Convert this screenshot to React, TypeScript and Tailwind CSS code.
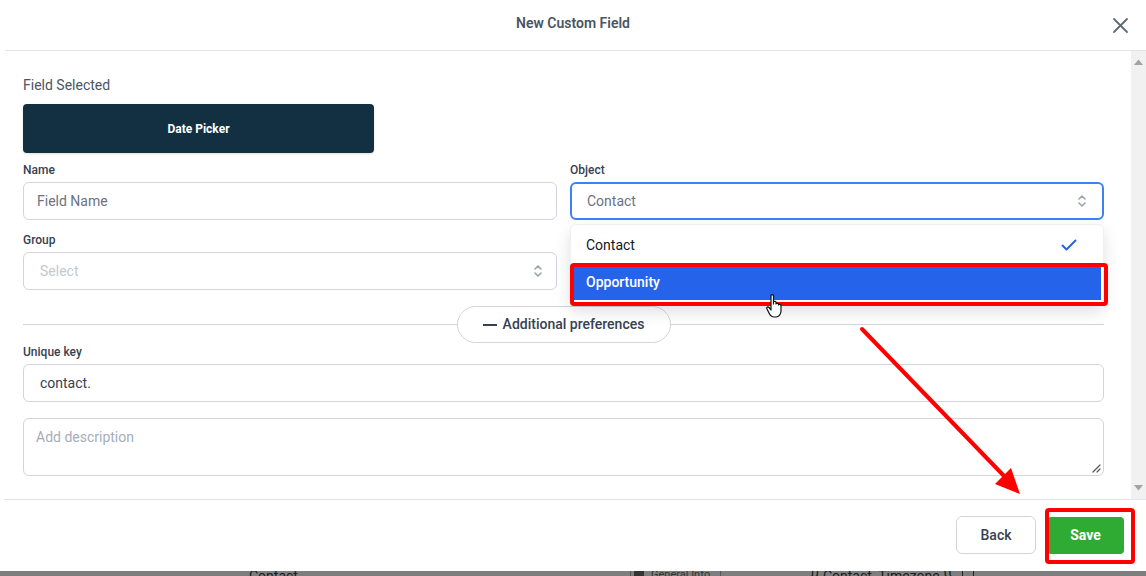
import React from "react";

function Chevrons({ className = "" }: { className?: string }) {
  return (
    <svg width="10" height="16" viewBox="0 0 10 16" className={className} fill="none" stroke="currentColor" strokeWidth="1.6" strokeLinecap="round" strokeLinejoin="round">
      <path d="M2 6 L5 3 L8 6" />
      <path d="M2 10 L5 13 L8 10" />
    </svg>
  );
}

export default function App() {
  return (
    <div className="relative w-[1146px] h-[576px] overflow-hidden bg-white flex flex-col" style={{ fontFamily: "Roboto, 'Noto Sans', sans-serif" }}>
      {/* Modal */}
      <div className="flex-1 flex flex-col bg-white min-h-0">
        {/* Header */}
        <div className="relative h-[51px] shrink-0 flex items-center justify-center">
          <span className="text-[14px] font-semibold text-[#4b5563] -mt-[5px]">New Custom Field</span>
          <svg className="absolute right-[17px] top-[17px]" width="17" height="17" viewBox="0 0 17 17" fill="none" stroke="#5f6b73" strokeWidth="1.8" strokeLinecap="round">
            <path d="M2 2 L15 15 M15 2 L2 15" />
          </svg>
          <div className="absolute left-[5px] right-0 bottom-0 h-px bg-[#e2e4ea]" />
        </div>

        {/* Body */}
        <div className="flex-1 flex min-h-0">
          <div className="flex-1 pl-[23px] pr-[27px] pt-[24px]">
            <div className="text-[14px] leading-[20px] text-[#4b5563]">Field Selected</div>
            <div className="mt-[9px] w-[351px] h-[49px] rounded-[4px] bg-[#132f42] flex items-center justify-center text-white text-[12px] font-bold shadow-sm">
              Date Picker
            </div>

            <div className="grid grid-cols-2 gap-x-[13px] mt-[9px]">
              <div>
                <div className="text-[12px] leading-[16px] font-medium text-[#374151]">Name</div>
                <div className="mt-[4px] h-[38px] rounded-[6px] border border-[#d1d5db] flex items-center pl-[13px] text-[14px] text-[#6b7280]">
                  Field Name
                </div>
              </div>
              <div className="relative">
                <div className="text-[12px] leading-[16px] font-medium text-[#374151]">Object</div>
                <div className="mt-[4px] h-[38px] rounded-[6px] border-2 border-[#3b82f6] flex items-center justify-between pl-[15px] pr-[15px] text-[14px] text-[#6b7280]">
                  <span>Contact</span>
                  <Chevrons className="text-[#9ca3af]" />
                </div>
                {/* Dropdown */}
                <div className="absolute left-0 right-0 top-[62px] z-20 rounded-[6px] bg-white border border-[#eef0f3] shadow-[0_6px_16px_rgba(0,0,0,0.12)] pb-[5px]">
                  <div className="h-[40px] flex items-center justify-between pl-[15px] pr-[26px] text-[14px] text-[#111827]">
                    <span>Contact</span>
                    <svg width="16" height="12" viewBox="0 0 16 12" fill="none" stroke="#2563eb" strokeWidth="2" strokeLinecap="round" strokeLinejoin="round">
                      <path d="M1.5 6.5 L5.5 10.5 L14.5 1.5" />
                    </svg>
                  </div>
                  <div className="relative h-[35px] mx-[2px] bg-[#2563eb] flex items-center pl-[13px] text-[14px] font-medium text-white">
                    Opportunity
                  </div>
                  <div className="absolute left-[-1px] right-[-5px] top-[38px] h-[43px] border-4 border-[#ff0000] rounded-[4px] pointer-events-none" />
                </div>
              </div>
              <div className="mt-[12px]">
                <div className="text-[12px] leading-[16px] font-medium text-[#374151]">Group</div>
                <div className="mt-[4px] h-[38px] rounded-[6px] border border-[#d1d5db] flex items-center justify-between pl-[16px] pr-[13px] text-[14px] text-[#c4c8cf]">
                  <span>Select</span>
                  <Chevrons className="text-[#9ca3af]" />
                </div>
              </div>
              <div />
            </div>

            {/* Additional preferences divider */}
            <div className="relative mt-[16px] h-[37px] flex items-center justify-center">
              <div className="absolute left-0 right-0 top-[18px] h-px bg-[#d1d5db]" />
              <div className="relative h-[37px] w-[214px] rounded-full border border-[#d1d5db] bg-white flex items-center justify-center gap-[6px] text-[14px] font-medium text-[#374151]">
                <span className="inline-block w-[14px] h-[2px] bg-[#374151]" />
                <span>Additional preferences</span>
              </div>
            </div>

            <div className="mt-[1px] text-[12px] leading-[16px] font-medium text-[#374151]">Unique key</div>
            <div className="mt-[4px] h-[38px] rounded-[6px] border border-[#d1d5db] flex items-center pl-[16px] text-[14px] text-[#374151]">
              contact.
            </div>

            <div className="relative mt-[16px] h-[58px] rounded-[6px] border border-[#d1d5db] pl-[12px] pt-[8px] text-[14px] text-[#a5adb8]">
              Add description
              <svg className="absolute right-[2px] bottom-[2px]" width="10" height="10" viewBox="0 0 10 10" stroke="#555" strokeWidth="1.2" strokeLinecap="round">
                <path d="M9 2 L2 9 M9 6 L6 9" />
              </svg>
            </div>
          </div>

          {/* Scrollbar */}
          <div className="w-[15px] bg-[#f1f1f1] flex flex-col items-center justify-between py-[8px]">
            <svg width="9" height="6" viewBox="0 0 9 6"><path d="M0 6 L4.5 0.5 L9 6 Z" fill="#a3a3a3" /></svg>
            <svg width="9" height="6" viewBox="0 0 9 6"><path d="M0 0 L4.5 5.5 L9 0 Z" fill="#a3a3a3" /></svg>
          </div>
        </div>

        {/* Footer */}
        <div className="relative h-[72px] shrink-0 flex items-center justify-end pr-[22px] gap-[11px]">
          <div className="absolute left-[4px] right-0 top-0 h-px bg-[#e2e4ea]" />
          <div className="h-[38px] w-[80px] rounded-[6px] border border-[#d1d5db] bg-white flex items-center justify-center text-[14px] font-medium text-[#374151]">
            Back
          </div>
          <div className="h-[37px] w-[77px] rounded-[4px] bg-[#2fab34] flex items-center justify-center text-[14px] font-bold text-white">
            Save
          </div>
          <div className="absolute right-[11px] top-[9px] w-[90px] h-[56px] border-4 border-[#ff0000] rounded-[4px] pointer-events-none" />
        </div>
      </div>

      {/* Background page strip */}
      <div className="h-[5px] shrink-0 bg-[#7e7e7e] overflow-hidden relative text-[14px] text-[#1a1a1a]">
        <span className="absolute left-[249px] top-[-3px] leading-[16px]">Contact</span>
        <span className="absolute left-[630px] top-[-1px] h-[8px] w-px bg-[#555]" />
        <span className="absolute left-[634px] top-[-2px] w-[10px] h-[8px] bg-[#333]" />
        <span className="absolute left-[651px] top-[-4px] leading-[16px] text-[11px] text-[#333]">General Info</span>
        <span className="absolute left-[720px] top-[-1px] h-[8px] w-px bg-[#555]" />
        <span className="absolute left-[810px] top-[-3px] leading-[16px]">{"{{ Contact_Timezone }}"}</span>
        <span className="absolute left-[962px] top-[-2px] w-[12px] h-[10px] border border-[#222] rounded-[2px]" />
      </div>

      {/* Red arrow annotation */}
      <svg className="absolute left-0 top-0 pointer-events-none z-30" width="1146" height="576" viewBox="0 0 1146 576">
        <line x1="862" y1="329" x2="1006" y2="478" stroke="#ff0000" strokeWidth="4" strokeLinecap="round" />
        <polygon points="1020,494 995,484 1011,468" fill="#ff0000" />
      </svg>

      {/* Hand cursor */}
      <svg className="absolute left-[765px] top-[293px] z-30 pointer-events-none" width="22" height="26" viewBox="0 0 22 26">
        <path
          d="M6 2.5 C6 1.4 8.5 1.4 8.5 2.5 L8.5 11 L8.5 9 C8.5 8 11 8 11 9 L11 11 C11 10 13.5 10 13.5 11 L13.5 12 C13.5 11 16 11 16 12.5 L16 18 C16 21 14 24 11 24 L9 24 C6.5 24 5 22 4 20 L1.8 15.5 C1.2 14.3 3 13.3 4 14.5 L6 17 Z"
          fill="#ffffff"
          stroke="#111"
          strokeWidth="1.2"
          strokeLinejoin="round"
        />
      </svg>
    </div>
  );
}
